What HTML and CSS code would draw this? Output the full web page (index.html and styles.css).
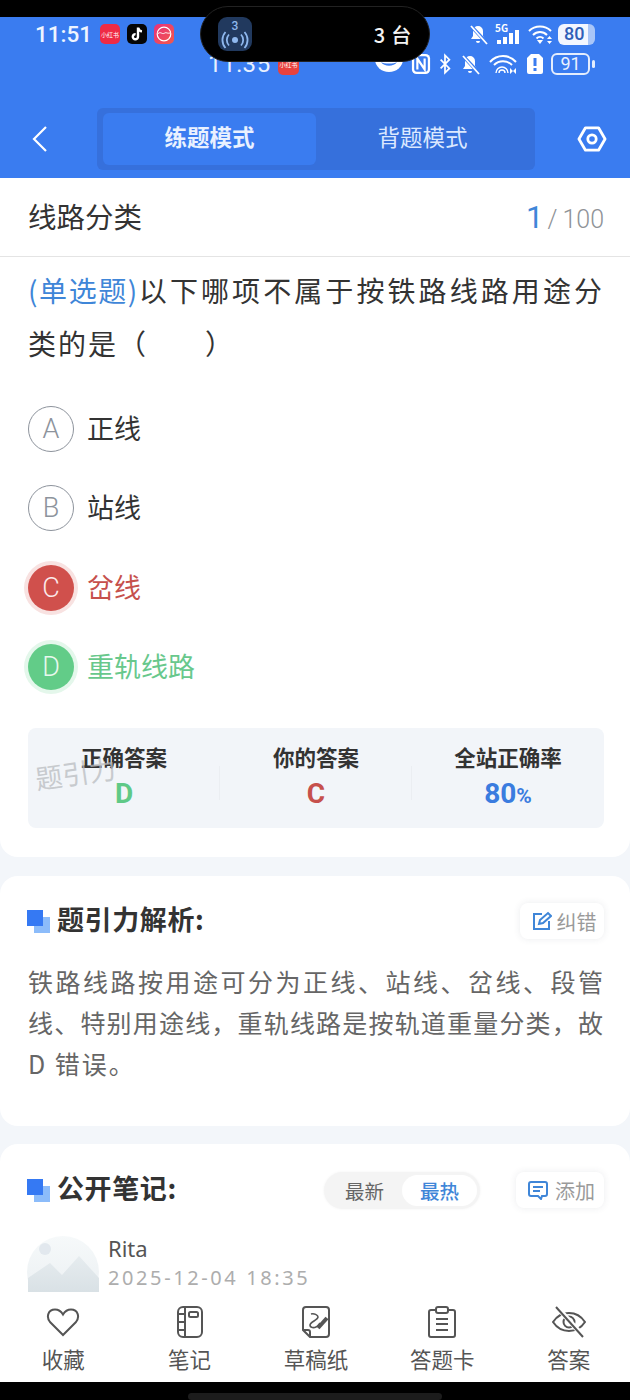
FILE: index.html
```html
<!DOCTYPE html>
<html lang="zh-CN">
<head>
<meta charset="utf-8">
<title>线路分类</title>
<link rel="stylesheet" href="styles.css">
</head>
<body>
<div class="phone">
  <div class="topblack"></div>
  <header class="header">
    <div class="status">
      <span class="clock">11:51</span>
      <span class="app app-red">小红书</span>
      <span class="app app-tt"><svg viewBox="0 0 20 20" width="20" height="20"><path d="M11 3.500v9.200a2.600 2.600 0 1 1-2.400-2.600" fill="none" stroke="#fff" stroke-width="2.400"/><path d="M11.200 4c.4 2 1.700 3.200 3.800 3.400" fill="none" stroke="#fff" stroke-width="2.400"/></svg></span>
      <span class="app app-pink"><svg viewBox="0 0 20 20" width="20" height="20"><circle cx="10" cy="10" r="6.800" fill="none" stroke="#fff" stroke-width="1.200"/><path d="M4 9.500c2-1.500 3-.5 4.500 0s2.500-1 3.500-.8 2 .8 4 .3" fill="none" stroke="#fff" stroke-width="1"/></svg></span>
      <span class="spacer"></span>
      <svg class="si" viewBox="0 0 22 22" width="22" height="22"><path d="M11 3a5 5 0 0 0-5 5v5l-2 3h14l-2-3V8a5 5 0 0 0-5-5zM9 18a2 2 0 0 0 4 0z" fill="#fff"/><path d="M3 2l17 18" stroke="#3a7cf0" stroke-width="3.500"/><path d="M4 3l16 18" stroke="#fff" stroke-width="1.800"/></svg>
      <span class="sig"><span class="sig5g">5G</span><svg viewBox="0 0 26 22" width="26" height="22"><rect x="3" y="17" width="4" height="4" fill="#fff"/><rect x="9" y="14" width="4" height="7" fill="#fff"/><rect x="15" y="10" width="4" height="11" fill="#fff"/><rect x="21" y="7" width="4" height="14" fill="#fff"/></svg></span>
      <svg class="si" viewBox="0 0 26 22" width="26" height="22"><path d="M2 8c6-6 16-6 22 0M6 12c4-4 10-4 14 0M9.500 15.500c2-2 5-2 7 0" fill="none" stroke="#fff" stroke-width="2"/><path d="M10 17h6l-3 4zM20 16l2.500-3 2.500 3zM20 18l2.500 3 2.500-3z" fill="#fff"/></svg>
      <span class="batt"><span class="batt-num">80</span></span>
    </div>
    <div class="status2" aria-hidden="true">
      <span class="clock2">11:35</span>
      <span class="app2">小红书</span>
      <span class="spacer"></span>
      <svg class="s2" viewBox="0 0 28 22" width="28" height="22"><ellipse cx="14" cy="6" rx="14" ry="13" fill="#fff"/><path d="M6 9c3 5 13 5 16 0-3 2-13 2-16 0z" fill="#3a7cf0"/></svg>
      <svg class="s2" viewBox="0 0 22 24" width="20" height="22"><rect x="1" y="1" width="20" height="22" rx="5" fill="#fff"/><rect x="3.500" y="3.500" width="15" height="17" rx="3" fill="#3a7cf0"/><path d="M7 18V6l8 12V6" fill="none" stroke="#fff" stroke-width="2.400"/></svg>
      <svg class="s2" viewBox="0 0 16 22" width="14" height="22"><path d="M3 6l10 10-5 5V1l5 5L3 16" fill="none" stroke="#fff" stroke-width="2"/></svg>
      <svg class="s2" viewBox="0 0 22 22" width="22" height="22"><path d="M11 3a5 5 0 0 0-5 5v5l-2 3h14l-2-3V8a5 5 0 0 0-5-5zM9 18a2 2 0 0 0 4 0z" fill="#fff"/><path d="M3 2l17 18" stroke="#3a7cf0" stroke-width="3.500"/><path d="M4 3l16 18" stroke="#fff" stroke-width="1.800"/></svg>
      <svg class="s2" viewBox="0 0 30 22" width="30" height="22"><path d="M2 9c7-8 19-8 26 0M6 12c5-5 13-5 18 0" fill="none" stroke="#fff" stroke-width="2"/><path d="M8 20a6 6 0 0 1 12 0M11 20a3 3 0 0 1 6 0" fill="none" stroke="#fff" stroke-width="1.400"/><path d="M22 15l3 3-3 3zM28 15v6l-3-3z" fill="#fff"/></svg>
      <svg class="s2" viewBox="0 0 18 22" width="18" height="22"><path d="M5 1h8l4 4v14a2 2 0 0 1-2 2H3a2 2 0 0 1-2-2V5z" fill="#fff"/><rect x="7.500" y="5" width="3" height="8" fill="#3a7cf0"/><rect x="7.500" y="15" width="3" height="3" fill="#3a7cf0"/></svg>
      <span class="batt2"><span class="batt2-num">91</span></span>
    </div>
    <nav class="navrow">
      <svg class="back" viewBox="0 0 16 28" width="16" height="28"><path d="M14 2L2 14l12 12" fill="none" stroke="#fff" stroke-width="2.200"/></svg>
      <div class="tabs">
        <span class="tab tab-on">练题模式</span>
        <span class="tab">背题模式</span>
      </div>
      <svg class="cog" viewBox="0 0 32 30" width="30" height="28"><path d="M9 3h14l7 12-7 12H9L2 15z" fill="none" stroke="#fff" stroke-width="3" stroke-linejoin="round"/><circle cx="16" cy="15" r="4.500" fill="none" stroke="#fff" stroke-width="3"/></svg>
    </nav>
  </header>

  <div class="island">
    <span class="island-icon"><span class="island-num">3</span><svg viewBox="0 0 28 18" width="28" height="18"><circle cx="14" cy="9" r="3" fill="#8fb8ee"/><path d="M8 3.500a8 8 0 0 0 0 11M20 3.500a8 8 0 0 1 0 11M4.500 1a12 12 0 0 0 0 16M23.500 1a12 12 0 0 1 0 16" fill="none" stroke="#8fb8ee" stroke-width="1.800"/></svg></span>
    <span class="island-text">3 台</span>
  </div>

  <main class="main">
    <section class="card card-q">
      <div class="title-row">
        <span class="title">线路分类</span>
        <span class="count"><b>1</b><i>/</i>100</span>
      </div>
      <div class="qbody">
        <p class="question"><span class="qtype">(单选题)</span>以下哪项不属于按铁路线路用途分类的是（<span class="blank">　　</span>）</p>
        <ul class="options">
          <li class="opt"><span class="letter">A</span><span class="opt-text">正线</span></li>
          <li class="opt"><span class="letter">B</span><span class="opt-text">站线</span></li>
          <li class="opt opt-wrong"><span class="letter">C</span><span class="opt-text">岔线</span></li>
          <li class="opt opt-right"><span class="letter">D</span><span class="opt-text">重轨线路</span></li>
        </ul>
        <div class="stats">
          <div class="stat"><span class="stat-label">正确答案</span><span class="stat-val val-green">D</span></div>
          <div class="stat"><span class="stat-label">你的答案</span><span class="stat-val val-red">C</span></div>
          <div class="stat"><span class="stat-label">全站正确率</span><span class="stat-val val-blue">80<small>%</small></span></div>
          <span class="watermark">题引力</span>
        </div>
      </div>
    </section>

    <section class="card card-a">
      <div class="sec-head">
        <span class="squares"></span>
        <h2 class="sec-title">题引力解析:</h2>
        <span class="pill-btn pill-small"><svg viewBox="0 0 20 20" width="20" height="20"><path d="M10 3H2v15h15v-8" fill="none" stroke="#3f86d8" stroke-width="2"/><path d="M7 13l1-4 8-7 3 3-8 7z" fill="none" stroke="#3f86d8" stroke-width="2"/></svg><span>纠错</span></span>
      </div>
      <p class="analysis"><span class="aline">铁路线路按用途可分为正线、站线、岔线、段管</span><span class="aline">线、特别用途线，重轨线路是按轨道重量分类，故</span><span class="alast">D 错误。</span></p>
    </section>

    <section class="card card-n">
      <div class="sec-head">
        <span class="squares"></span>
        <h2 class="sec-title">公开笔记:</h2>
        <span class="switch"><span class="sw">最新</span><span class="sw sw-on">最热</span></span>
        <span class="pill-btn"><svg viewBox="0 0 22 20" width="22" height="20"><path d="M4 2h14a2 2 0 0 1 2 2v10a2 2 0 0 1-2 2h-3l-1 3-3-3H4a2 2 0 0 1-2-2V4a2 2 0 0 1 2-2z" fill="none" stroke="#3f86d8" stroke-width="2"/><path d="M6 7h10M6 11h7" stroke="#3f86d8" stroke-width="2"/></svg><span>添加</span></span>
      </div>
      <div class="note-user">
        <svg class="avatar" viewBox="0 0 72 72" width="72" height="72"><defs><linearGradient id="av" x1="0" y1="0" x2="0" y2="1"><stop offset="0" stop-color="#f6f9fa"/><stop offset="1" stop-color="#e9eef1"/></linearGradient><linearGradient id="mt" x1="0" y1="0" x2="0" y2="1"><stop offset="0" stop-color="#e6ecef"/><stop offset="1" stop-color="#d3dce1"/></linearGradient></defs><circle cx="36" cy="36" r="36" fill="url(#av)"/><circle cx="18" cy="13" r="6" fill="#e2e8ee"/><path d="M1 42l22-15 12 12 17-19 20 22v30H1z" fill="url(#mt)"/></svg>
        <div class="user-meta"><span class="user-name">Rita</span><span class="user-date">2025-12-04 18:35</span></div>
      </div>
    </section>
  </main>

  <footer class="tabbar">
    <div class="tb"><svg viewBox="0 0 34 32" width="34" height="32"><path d="M17 29L4 16C0 11 2 3.500 9 3.500c4 0 6.500 2.500 8 5 1.500-2.500 4-5 8-5 7 0 9 7.500 5 12.500z" fill="none" stroke="#555" stroke-width="2"/></svg><span>收藏</span></div>
    <div class="tb"><svg viewBox="0 0 30 32" width="30" height="32"><rect x="3" y="1" width="24" height="30" rx="5" fill="none" stroke="#555" stroke-width="2"/><path d="M10 1v30M3 8h7M3 16h7M3 24h7" fill="none" stroke="#555" stroke-width="2"/><rect x="14" y="6" width="9" height="5" rx="1.500" fill="none" stroke="#555" stroke-width="2"/></svg><span>笔记</span></div>
    <div class="tb"><svg viewBox="0 0 30 32" width="30" height="32"><path d="M5 1h20a3 3 0 0 1 3 3v24a3 3 0 0 1-3 3H9l-7-7V4a3 3 0 0 1 3-3z" fill="none" stroke="#555" stroke-width="2"/><path d="M2 24h5a2 2 0 0 1 2 2v5" fill="none" stroke="#555" stroke-width="2"/><path d="M10 8c3-1 7 1 7 3 0 3-8 5-8 8s4 3 6 2 3-3 4-4" fill="none" stroke="#555" stroke-width="1.600"/><path d="M17 22l9-10" stroke="#555" stroke-width="4"/></svg><span>草稿纸</span></div>
    <div class="tb"><svg viewBox="0 0 30 32" width="30" height="32"><path d="M9 4H4a2 2 0 0 0-2 2v23a2 2 0 0 0 2 2h22a2 2 0 0 0 2-2V6a2 2 0 0 0-2-2h-5" fill="none" stroke="#555" stroke-width="2"/><rect x="9" y="1" width="12" height="6" rx="2" fill="none" stroke="#555" stroke-width="2"/><path d="M9 13h12M9 18h12M9 24h12" stroke="#555" stroke-width="2"/></svg><span>答题卡</span></div>
    <div class="tb"><svg viewBox="0 0 36 32" width="36" height="32"><path d="M2 16c8-12 24-12 32 0-8 12-24 12-32 0z" fill="none" stroke="#555" stroke-width="2"/><circle cx="18" cy="16" r="5.500" fill="none" stroke="#555" stroke-width="2"/><path d="M6 1l26 29" stroke="#fff" stroke-width="5"/><path d="M5 1l27 30" stroke="#555" stroke-width="2"/></svg><span>答案</span></div>
  </footer>
  <div class="navbar"><span class="home"></span></div>
</div>
</body>
</html>
```
FILE: styles.css
```css
* { box-sizing: border-box; }
html, body { margin: 0; padding: 0; background: #000; }
body { font-family: "Noto Sans CJK SC", "Noto Sans", sans-serif; }
.phone { position: relative; width: 630px; height: 1400px; overflow: hidden; display: flex; flex-direction: column; background: #f3f6fa; }
.topblack { height: 17px; background: #000; flex: none; }
.header { height: 161px; flex: none; background: #3a7cf0; position: relative; display: flex; flex-direction: column; }
.status { height: 34px; display: flex; align-items: center; padding: 0 35px; color: #fff; position: relative; z-index: 1; }
.clock { font-family: Roboto, sans-serif; font-size: 22.500px; font-weight: 500; color: #eef4ff; margin-right: 8px; }
.app { width: 20px; height: 20px; border-radius: 5px; margin-right: 7px; display: flex; align-items: center; justify-content: center; font-size: 6px; color: #fff; white-space: nowrap; overflow: hidden; }
.app-red { background: #ef2b45; }
.app-tt { background: #050505; }
.app-pink { background: linear-gradient(135deg, #e8317c, #f25a4b); }
.spacer { flex: 1; }
.si { flex: none; margin-right: 5px; }
.sig { position: relative; width: 26px; height: 22px; margin-right: 7px; display: block; }
.sig5g { position: absolute; left: 1px; top: -1px; font-size: 10px; font-weight: 700; line-height: 11px; }
.sig svg { display: block; }
.batt { width: 37px; height: 21px; border-radius: 6px; background: linear-gradient(90deg, #f2f6ff 0 80%, #a9c6f8 80%); display: flex; align-items: center; padding-left: 6px; }
.batt-num { font-family: Roboto, sans-serif; font-weight: 500; font-size: 18px; color: #2f5fb8; line-height: 20px; }
.status2 { height: 24px; display: flex; align-items: center; gap: 7.300px; padding: 0 40px 0 208px; margin-top: 1px; color: #fff; }
.clock2 { font-family: Roboto, sans-serif; font-size: 24px; color: #e8f0ff; letter-spacing: .6px; }
.app2 { width: 21px; height: 22px; border-radius: 5px; background: #e8423e; font-size: 6px; color: #fff; display: flex; align-items: center; justify-content: center; white-space: nowrap; overflow: hidden; }
.s2 { flex: none; }
.batt2 { position: relative; width: 39px; height: 22px; border: 2px solid #e4edfd; border-radius: 6px; display: flex; align-items: center; justify-content: center; }
.batt2::after { content: ""; position: absolute; right: -7px; top: 5px; width: 3px; height: 8px; border-radius: 2px; background: #e4edfd; }
.batt2-num { font-family: Roboto, sans-serif; font-size: 18px; color: #eaf1ff; line-height: 18px; }
.navrow { display: flex; align-items: center; padding: 0 23px 0 32px; margin-top: 32px; }
.back { flex: none; }
.tabs { width: 438px; height: 62px; margin-left: 49px; background: #3670dc; border-radius: 6px; padding: 5px 6px; display: flex; flex: none; }
.tab { flex: 1; display: flex; align-items: center; justify-content: center; font-size: 22.500px; color: #dbe8ff; border-radius: 6px; padding-bottom: 7px; }
.tab-on { flex: none; width: 213px; background: #3a7cf0; font-weight: 700; color: #e9f1ff; }
.cog { flex: none; margin-left: 42px; }
.island { position: absolute; left: 200px; top: 6px; width: 230px; height: 56px; border-radius: 28px; background: #000; border: 1px solid #222; display: flex; align-items: center; padding: 0 17px; justify-content: space-between; z-index: 3; }
.island-icon { width: 34px; height: 34px; border-radius: 9px; background: #21395e; display: flex; flex-direction: column; align-items: center; color: #8fb8ee; font-size: 12px; line-height: 11px; padding-top: 4px; }
.island-num { font-family: Roboto, sans-serif; font-weight: 500; height: 10px; }
.island-text { font-size: 20px; font-weight: 500; color: #f4f4f4; letter-spacing: .8px; }
.main { flex: 1; min-height: 0; overflow: hidden; display: flex; flex-direction: column; gap: 19px; }
.card { background: #fff; flex: none; }
.card-q { border-radius: 0 0 18px 18px; height: 679px; }
.title-row { height: 79px; display: flex; align-items: center; justify-content: space-between; padding: 0 26px 0 28px; border-bottom: 1px solid #e4e4e4; }
.title { font-size: 28.500px; font-weight: 400; color: #333; padding-bottom: 3px; }
.count { font-family: Roboto, sans-serif; font-size: 25px; font-weight: 300; color: #8f9397; display: flex; align-items: baseline; }
.count b { font-weight: 400; font-size: 31px; color: #3f86d8; }
.count i { font-style: normal; margin: 0 5px 0 4px; }
.qbody { padding: 7px 26px 0 28px; }
.question { margin: 0; font-size: 28px; line-height: 53px; letter-spacing: 2px; color: #333; text-align: justify; }
.qtype { color: #3f86d8; letter-spacing: .5px; }
.blank { letter-spacing: .5px; }
.options { list-style: none; margin: 36px 0 0; padding: 0; display: flex; flex-direction: column; gap: 33.300px; }
.opt { display: flex; align-items: center; gap: 13px; height: 46px; font-size: 27px; color: #333; }
.opt-text { padding-bottom: 3px; }
.letter { width: 46px; height: 46px; border-radius: 50%; border: 1.500px solid #8d939c; color: #8d939c; display: flex; align-items: center; justify-content: center; font-family: Roboto, sans-serif; font-weight: 300; font-size: 27px; flex: none; }
.opt-wrong { color: #c6504c; }
.opt-wrong .letter { background: #d0504c; border: none; color: #fbeaea; box-shadow: 0 0 0 4px #f8e2e1; }
.opt-right { color: #68c88c; }
.opt-right .letter { background: #62cc88; border: none; color: #e8f8ee; box-shadow: 0 0 0 4px #e4f7eb; }
.stats { position: relative; margin-top: 38px; width: 576px; height: 100px; border-radius: 8px; background: #f2f5f9; display: flex; padding-top: 10px; }
.stat { flex: 1; display: flex; flex-direction: column; align-items: center; }
.stat:nth-child(-n+2) { background: linear-gradient(#ebeef2, #ebeef2) right 28px / 1px 34px no-repeat; }
.stat-label { font-size: 21.500px; font-weight: 700; color: #333; line-height: 38px; }
.stat-val { font-family: Roboto, sans-serif; font-size: 28px; font-weight: 700; line-height: 36px; }
.stat-val small { font-size: 21px; }
.val-green { color: #5fc987; }
.val-red { color: #c6504c; }
.val-blue { color: #3a7cdf; }
.watermark { position: absolute; left: 7px; top: 25px; font-size: 27px; color: #b9bcc0; opacity: .75; transform: rotate(-8deg); }
.card-a { border-radius: 18px; height: 250px; padding: 0 26px 0 27px; }
.sec-head { display: flex; align-items: center; height: 36px; }
.card-a .sec-head { margin-top: 27px; }
.card-n .sec-head { margin-top: 28px; }
.squares { position: relative; width: 23px; height: 23px; flex: none; background: linear-gradient(#8cbcfa, #8cbcfa) 7px 7px / 16px 16px no-repeat; margin-right: 7px; }
.squares::before { content: ""; position: absolute; left: 0; top: 0; width: 16px; height: 16px; background: #3579f3; }
.sec-title { margin: 0; flex: 1; font-size: 27px; font-weight: 700; color: #333; letter-spacing: .6px; padding-bottom: 5px; }
.pill-btn { flex: none; width: 88px; height: 36px; border-radius: 8px; background: #fff; box-shadow: 0 0 7px rgba(60, 70, 90, .1); display: flex; align-items: center; justify-content: center; gap: 6px; padding-left: 2px; font-size: 20px; color: #9a9a9a; }
.pill-small { width: 84px; gap: 5px; padding-left: 4px; }
.analysis { margin: 22px 0 0 1px; font-size: 25px; line-height: 41px; letter-spacing: 1px; color: #666; }
.aline { display: block; white-space: nowrap; text-align: justify; text-align-last: justify; }
.alast { display: block; letter-spacing: 2px; }
.card-n { border-radius: 18px 18px 0 0; height: 300px; padding: 0 26px 0 27px; margin-top: -1px; }
.switch { flex: none; width: 156px; height: 37px; border-radius: 19px; background: #f4f4f4; display: flex; align-items: center; padding: 3px; margin-right: 36px; box-shadow: 0 0 3px rgba(0, 0, 0, .05); }
.sw { flex: 1; height: 31px; border-radius: 16px; display: flex; align-items: center; justify-content: center; font-size: 19.500px; color: #666; }
.sw-on { background: #fff; color: #3f86d8; font-weight: 500; }
.note-user { display: flex; margin-top: 28px; gap: 9px; }
.avatar { flex: none; }
.user-meta { display: flex; flex-direction: column; margin-top: -3px; }
.user-name { font-size: 22px; color: #555; line-height: 30px; font-family: "Noto Sans", sans-serif; }
.user-date { font-size: 20px; color: #adadad; letter-spacing: 2.600px; line-height: 30px; font-family: "Noto Sans", sans-serif; }
.tabbar { position: absolute; left: 0; right: 0; top: 1292px; height: 90px; background: #fff; display: grid; grid-template-columns: repeat(5, 126.400px); }
.tb { display: flex; flex-direction: column; align-items: center; font-size: 21.500px; color: #555; padding-top: 14px; line-height: 30px; gap: 6px; }
.tb svg { display: block; }
.navbar { position: absolute; left: 0; right: 0; top: 1382px; height: 18px; background: #000; }
.home { position: absolute; left: 188px; top: 11px; width: 254px; height: 7px; border-radius: 4px; background: #1c1c1c; }
```
